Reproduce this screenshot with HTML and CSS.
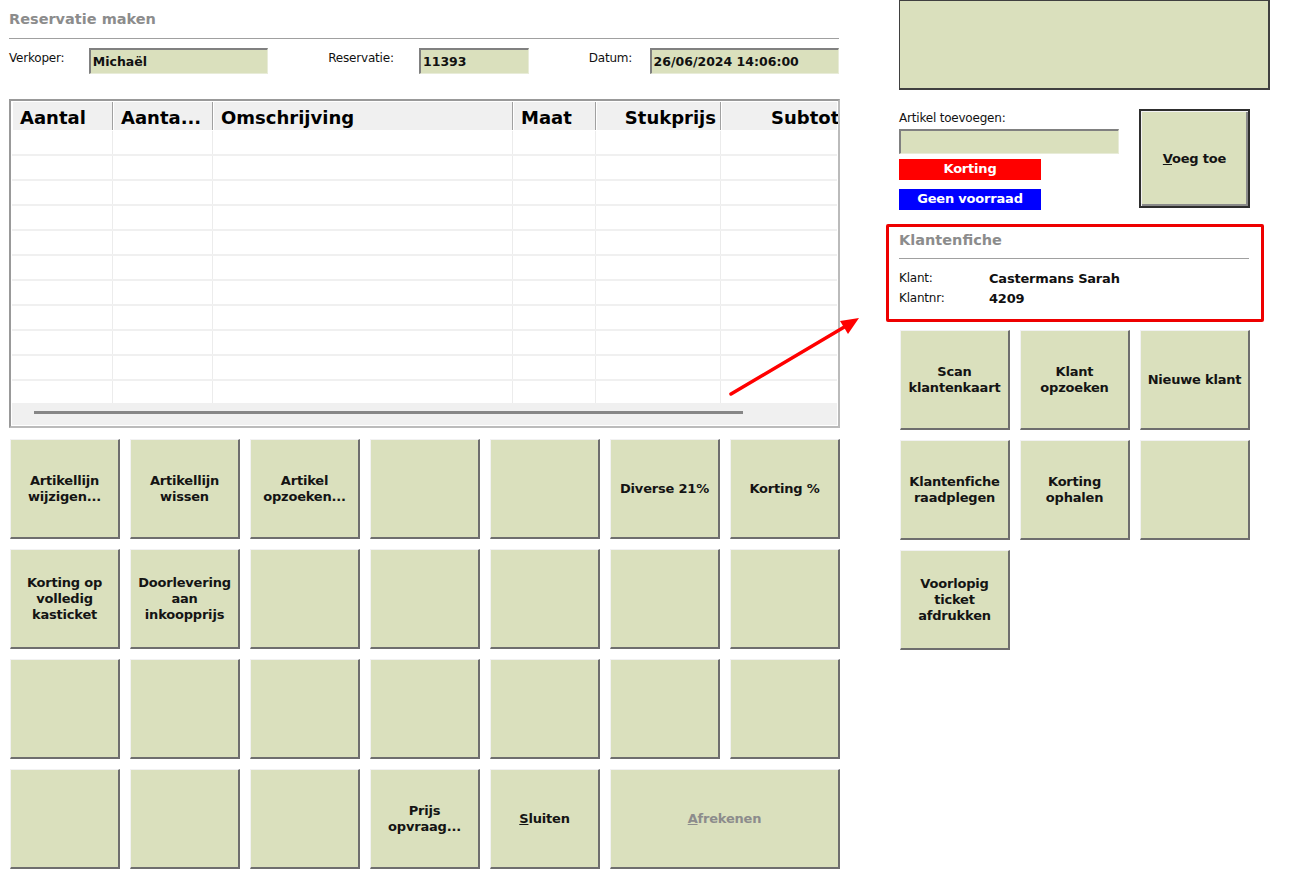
FILE: index.html
```html
<!DOCTYPE html>
<html lang="nl">
<head>
  <meta charset="UTF-8" />
  <title>Reservatie maken</title>
  <link rel="stylesheet" href="styles.css">
</head>
<body>
  <div class="page">
    <!-- Left side: reservation -->
    <div class="left">
      <h1 class="section-title">Reservatie maken</h1>
      <div class="meta-row">
        <span class="lbl lbl-verkoper">Verkoper:</span>
        <div class="field field-verkoper">Michaël</div>
        <span class="lbl lbl-res">Reservatie:</span>
        <div class="field field-res">11393</div>
        <span class="lbl lbl-datum">Datum:</span>
        <div class="field field-datum">26/06/2024 14:06:00</div>
      </div>

      <div class="grid-frame">
        <div class="grid-head">
          <div class="hcell">Aantal</div>
          <div class="hcell">Aanta...</div>
          <div class="hcell">Omschrijving</div>
          <div class="hcell">Maat</div>
          <div class="hcell align-r">Stukprijs</div>
          <div class="hcell clip">Subtot</div>
        </div>
        <div class="grid-body" id="gridBody"></div>
        <div class="hscroll"><div class="hscroll-thumb"></div></div>
      </div>

      <div class="btn-grid">
        <button class="pad">Artikellijn<br>wijzigen...</button>
        <button class="pad">Artikellijn<br>wissen</button>
        <button class="pad">Artikel<br>opzoeken...</button>
        <button class="pad"></button>
        <button class="pad"></button>
        <button class="pad">Diverse 21%</button>
        <button class="pad">Korting %</button>

        <button class="pad">Korting op<br>volledig<br>kasticket</button>
        <button class="pad">Doorlevering<br>aan<br>inkoopprijs</button>
        <button class="pad"></button>
        <button class="pad"></button>
        <button class="pad"></button>
        <button class="pad"></button>
        <button class="pad"></button>

        <button class="pad"></button>
        <button class="pad"></button>
        <button class="pad"></button>
        <button class="pad"></button>
        <button class="pad"></button>
        <button class="pad"></button>
        <button class="pad"></button>

        <button class="pad"></button>
        <button class="pad"></button>
        <button class="pad"></button>
        <button class="pad">Prijs<br>opvraag...</button>
        <button class="pad"><u>S</u>luiten</button>
        <button class="pad wide disabled"><u>A</u>frekenen</button>
      </div>
    </div>

    <!-- Right side: article + customer -->
    <div class="side">
      <div class="display-box"></div>

      <div class="add-row">
        <div class="add-left">
          <span class="lbl">Artikel toevoegen:</span>
          <div class="field field-add"></div>
          <div class="tag tag-red">Korting</div>
          <div class="tag tag-blue">Geen voorraad</div>
        </div>
        <button class="pad pad-default"><u>V</u>oeg toe</button>
      </div>

      <div class="klant-box">
        <h2 class="section-title">Klantenfiche</h2>
        <div class="klant-line"><span class="lbl">Klant:</span><b>Castermans Sarah</b></div>
        <div class="klant-line"><span class="lbl">Klantnr:</span><b>4209</b></div>
      </div>

      <div class="btn-grid small">
        <button class="pad">Scan<br>klantenkaart</button>
        <button class="pad">Klant<br>opzoeken</button>
        <button class="pad">Nieuwe klant</button>
        <button class="pad">Klantenfiche<br>raadplegen</button>
        <button class="pad">Korting<br>ophalen</button>
        <button class="pad"></button>
        <button class="pad">Voorlopig<br>ticket<br>afdrukken</button>
      </div>
    </div>
  </div>

  <!-- annotation arrow -->
  <svg class="arrow" width="1290" height="895" viewBox="0 0 1290 895">
    <line x1="731" y1="394" x2="846" y2="326" stroke="#ff0000" stroke-width="3.5" stroke-linecap="round"/>
    <polygon points="859,318 840,321 848,334" fill="#ff0000"/>
  </svg>

  <script>
    // empty rows of the article list
    const gridBody = document.getElementById('gridBody');
    for (let i = 0; i < 11; i++) {
      let row = '<div class="grid-row">';
      for (let c = 0; c < 6; c++) row += '<div class="cell"></div>';
      gridBody.innerHTML += row + '</div>';
    }
  </script>
</body>
</html>
```

FILE: styles.css
```css
* {
  margin: 0;
  padding: 0;
  box-sizing: border-box;
}

body {
  background: #fff;
  font-family: 'DejaVu Sans', sans-serif;
  font-size: 12px;
  color: #000;
  width: 1290px;
  height: 895px;
  overflow: hidden;
}

.page {
  display: flex;
  gap: 60px;
  padding-left: 9px;
}

.left {
  width: 830px;
}

.section-title {
  font-size: 14.5px;
  font-weight: bold;
  color: #8c8c8c;
  padding-top: 11px;
  height: 39px;
  border-bottom: 1px solid #a0a0a0;
}

.lbl {
  font-size: 12px;
  color: #111;
  letter-spacing: -0.2px;
}

.meta-row {
  display: flex;
  align-items: flex-start;
  margin-top: 9px;
  height: 51px;
}

.meta-row .lbl {
  padding-top: 3px;
}

.lbl-verkoper { width: 80px; }
.lbl-res { width: 91px; margin-left: 60px; }
.lbl-datum { width: 61px; margin-left: 60px; }

.field {
  background: #dae0bd;
  height: 26px;
  border-top: 2px solid #808080;
  border-left: 2px solid #808080;
  border-right: 1px solid #e8ecd8;
  border-bottom: 1px solid #e8ecd8;
  font-weight: bold;
  font-size: 12.5px;
  padding: 4px 2px 0;
  color: #111;
}

.field-verkoper { width: 180px; }
.field-res { width: 110px; }
.field-datum { width: 190px; }

/* article list */
.grid-frame {
  width: 831px;
  height: 329px;
  border: 2px solid #999;
  border-right-color: #bbb;
  border-bottom-color: #bbb;
  padding: 1px;
  background: #fff;
  display: flex;
  flex-direction: column;
  overflow: hidden;
}

.grid-head,
.grid-row {
  display: grid;
  grid-template-columns: 101px 100px 300px 83px 125px 117px;
}

.grid-head {
  height: 29px;
  background: #f0f0f0;
  border-bottom: 1px solid #fff;
}

.hcell {
  font-size: 18px;
  font-weight: bold;
  padding: 5px 0 0 7px;
  border-right: 1px solid #a0a0a0;
  border-left: 1px solid #fff;
  white-space: nowrap;
  overflow: hidden;
}

.hcell.align-r {
  text-align: right;
  padding-right: 4px;
}

.hcell.clip {
  padding-left: 49px;
  border-right: none;
}

.grid-body {
  flex: 1;
  overflow: hidden;
}

.grid-row {
  height: 25px;
  border-bottom: 2px solid #f0f0f0;
}

.cell {
  border-right: 1px solid #ececec;
}

.hscroll {
  height: 22px;
  background: #f0f0f0;
  padding: 8px 0 0 22px;
}

.hscroll-thumb {
  width: 709px;
  height: 3px;
  background: #868686;
}

/* touch buttons */
.btn-grid {
  display: grid;
  grid-template-columns: repeat(7, 110px);
  grid-auto-rows: 100px;
  gap: 10px;
  margin-top: 11px;
  margin-left: 1px;
}

.btn-grid.small {
  grid-template-columns: repeat(3, 110px);
  margin-top: 8px;
  margin-left: 1px;
}

.pad {
  background: #dae0bd;
  border: none;
  border-left: 1px solid #f2f2f2;
  border-top: 1px solid #f2f2f2;
  border-right: 2px solid #6e6e6e;
  border-bottom: 2px solid #6e6e6e;
  font-family: inherit;
  font-size: 13px;
  font-weight: bold;
  color: #141414;
  line-height: 16px;
  text-align: center;
  letter-spacing: -0.2px;
}

.pad.wide {
  grid-column: span 2;
}

.pad.disabled {
  color: #8c8c8c;
}

/* right side */
.side {
  width: 371px;
  display: flex;
  flex-direction: column;
}

.display-box {
  height: 90px;
  background: #dae0bd;
  border: 1px solid #404040;
  border-right-width: 2px;
  border-bottom-width: 2px;
}

.add-row {
  display: flex;
  gap: 20px;
  margin-top: 19px;
}

.add-left {
  width: 220px;
  display: flex;
  flex-direction: column;
  padding-top: 2px;
}

.add-left .lbl {
  height: 18px;
  line-height: 15px;
}

.field-add {
  height: 25px;
  width: 220px;
}

.tag {
  width: 142px;
  height: 21px;
  color: #fff;
  font-weight: bold;
  font-size: 13px;
  text-align: center;
  padding-top: 2px;
  margin-top: 5px;
  letter-spacing: -0.2px;
}

.tag-red { background: #ff0000; }
.tag-blue { background: #0000ff; margin-top: 9px; }

.pad-default {
  width: 111px;
  height: 99px;
  border: 2px solid #2e2e2e;
  box-shadow: inset 1px 1px #f2f2f2, inset -2px -2px #8a8a8a;
}

.klant-box {
  margin-top: 14px;
  margin-left: -13px;
  width: 378px;
  height: 98px;
  border: 3px solid #ee0000;
  border-radius: 2px;
  padding: 0 12px 0 10px;
}

.klant-box .section-title {
  padding-top: 5px;
  height: 32px;
  margin-bottom: 9px;
}

.klant-line {
  display: flex;
  height: 20px;
  align-items: center;
}

.klant-line .lbl {
  width: 90px;
}

.klant-line b {
  font-size: 13px;
  color: #111;
  letter-spacing: -0.2px;
}

.arrow {
  position: absolute;
  top: 0;
  left: 0;
  pointer-events: none;
}
```
